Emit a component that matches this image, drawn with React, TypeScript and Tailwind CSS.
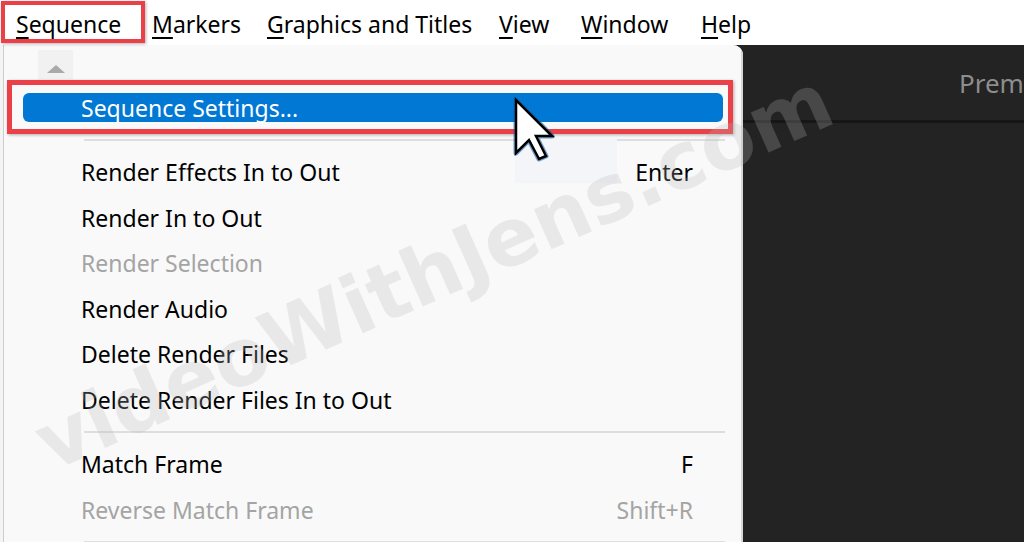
import React from 'react';

interface MenuItemProps {
  label: string;
  shortcut?: string;
  disabled?: boolean;
}

const topMenus = [
  { label: 'Sequence', width: 'w-[136px]' },
  { label: 'Markers', width: 'w-[115px]' },
  { label: 'Graphics and Titles', width: 'w-[232px]' },
  { label: 'View', width: 'w-[82px]' },
  { label: 'Window', width: 'w-[120px]' },
  { label: 'Help', width: 'w-[80px]' },
];

const MenuItem: React.FC<MenuItemProps> = ({ label, shortcut, disabled = false }) => (
  <div
    className={`flex h-[45.5px] items-center justify-between pl-[77px] pr-[48px] ${
      disabled ? 'text-[#a4a4a4]' : 'text-black'
    }`}
  >
    <span>{label}</span>
    {shortcut && <span>{shortcut}</span>}
  </div>
);

const Separator = () => (
  <div className="flex h-[19px] items-center pl-[80px] pr-[16px]">
    <div className="h-[2px] w-full bg-[#dedede]" />
  </div>
);

const Cursor = () => (
  <svg
    className="absolute left-[512px] top-[96px]"
    width="46"
    height="70"
    viewBox="-4 -4 46 70"
  >
    <polygon
      points="0,0 0,53 13,40 23,59 30,56 20,36 36,36"
      fill="none"
      stroke="#1d5fa8"
      strokeWidth="5"
      strokeLinejoin="round"
      opacity="0.6"
    />
    <polygon
      points="0,0 0,53 13,40 23,59 30,56 20,36 36,36"
      fill="#ffffff"
      stroke="#000000"
      strokeWidth="2.5"
      strokeLinejoin="miter"
    />
  </svg>
);

export default function App() {
  return (
    <div className="relative h-[542px] w-[1024px] overflow-hidden bg-white font-['Noto_Sans',sans-serif] text-[23px]">
      {/* menu bar */}
      <div className="flex h-[45px] items-center pl-[16px] pt-[4px] text-black">
        {topMenus.map((m) => (
          <div key={m.label} className={`${m.width} flex-none whitespace-nowrap`}>
            <span className="underline decoration-[1.5px] underline-offset-[4px]">{m.label[0]}</span>
            {m.label.slice(1)}
          </div>
        ))}
      </div>

      {/* below the bar */}
      <div className="flex h-[497px] bg-[#232323]">
        <div className="flex w-[743px] flex-none overflow-hidden rounded-tr-[10px] bg-[#f4f4f4] pl-[3px]">
          <div className="flex-1 border-l border-r-2 border-l-[#cdcdcd] border-r-[#d6d6d6] bg-[#f9f9f9]">
            <div className="h-[40px] pt-[5px]">
              <div className="ml-[34px] flex h-[30px] w-[35px] items-center justify-center bg-[#f1f1f1] pt-[8px]">
                <div className="h-0 w-0 border-x-[9px] border-b-[8px] border-x-transparent border-b-[#a9a9a9]" />
              </div>
            </div>

            <div className="flex h-[45.5px] items-center">
              <div className="ml-[19px] flex h-[29px] w-[700px] items-center rounded-[6px] bg-[#0078d4] pl-[58px] text-white">
                Sequence Settings...
              </div>
            </div>

            <Separator />
            <MenuItem label="Render Effects In to Out" shortcut="Enter" />
            <MenuItem label="Render In to Out" />
            <MenuItem label="Render Selection" disabled />
            <MenuItem label="Render Audio" />
            <MenuItem label="Delete Render Files" />
            <MenuItem label="Delete Render Files In to Out" />
            <Separator />
            <MenuItem label="Match Frame" shortcut="F" />
            <MenuItem label="Reverse Match Frame" shortcut="Shift+R" disabled />
            <Separator />
          </div>
        </div>

        <div className="flex-1 overflow-hidden">
          <div className="flex h-[75px] items-center whitespace-nowrap pl-[216px] pt-[2px] text-[26px] text-[#8d8d8d]">
            Premiere Pro 2023
          </div>
          <div className="h-[3px] bg-[#161616]" />
        </div>
      </div>

      {/* faint tooltip remnant behind the pointer */}
      <div className="absolute left-[515px] top-[138px] h-[45px] w-[102px] bg-[#f3f5f8]" />

      {/* annotation boxes */}
      <div className="absolute left-[1px] top-[1px] h-[42px] w-[144px] border-4 border-[#ec4048] shadow-[1px_1px_3px_rgba(0,0,0,0.3)]" />
      <div className="absolute left-[7px] top-[80px] h-[54px] w-[726px] border-[5px] border-[#ec4048] shadow-[1px_1px_3px_rgba(0,0,0,0.3)]" />

      <Cursor />

      {/* watermark */}
      <div className="pointer-events-none absolute left-[434px] top-[272px] -translate-x-1/2 -translate-y-1/2 rotate-[-24deg] whitespace-nowrap font-['DejaVu_Sans',sans-serif] text-[80px] font-bold leading-none text-[#b6b6b6]/25">
        videoWithJens.com
      </div>
    </div>
  );
}
